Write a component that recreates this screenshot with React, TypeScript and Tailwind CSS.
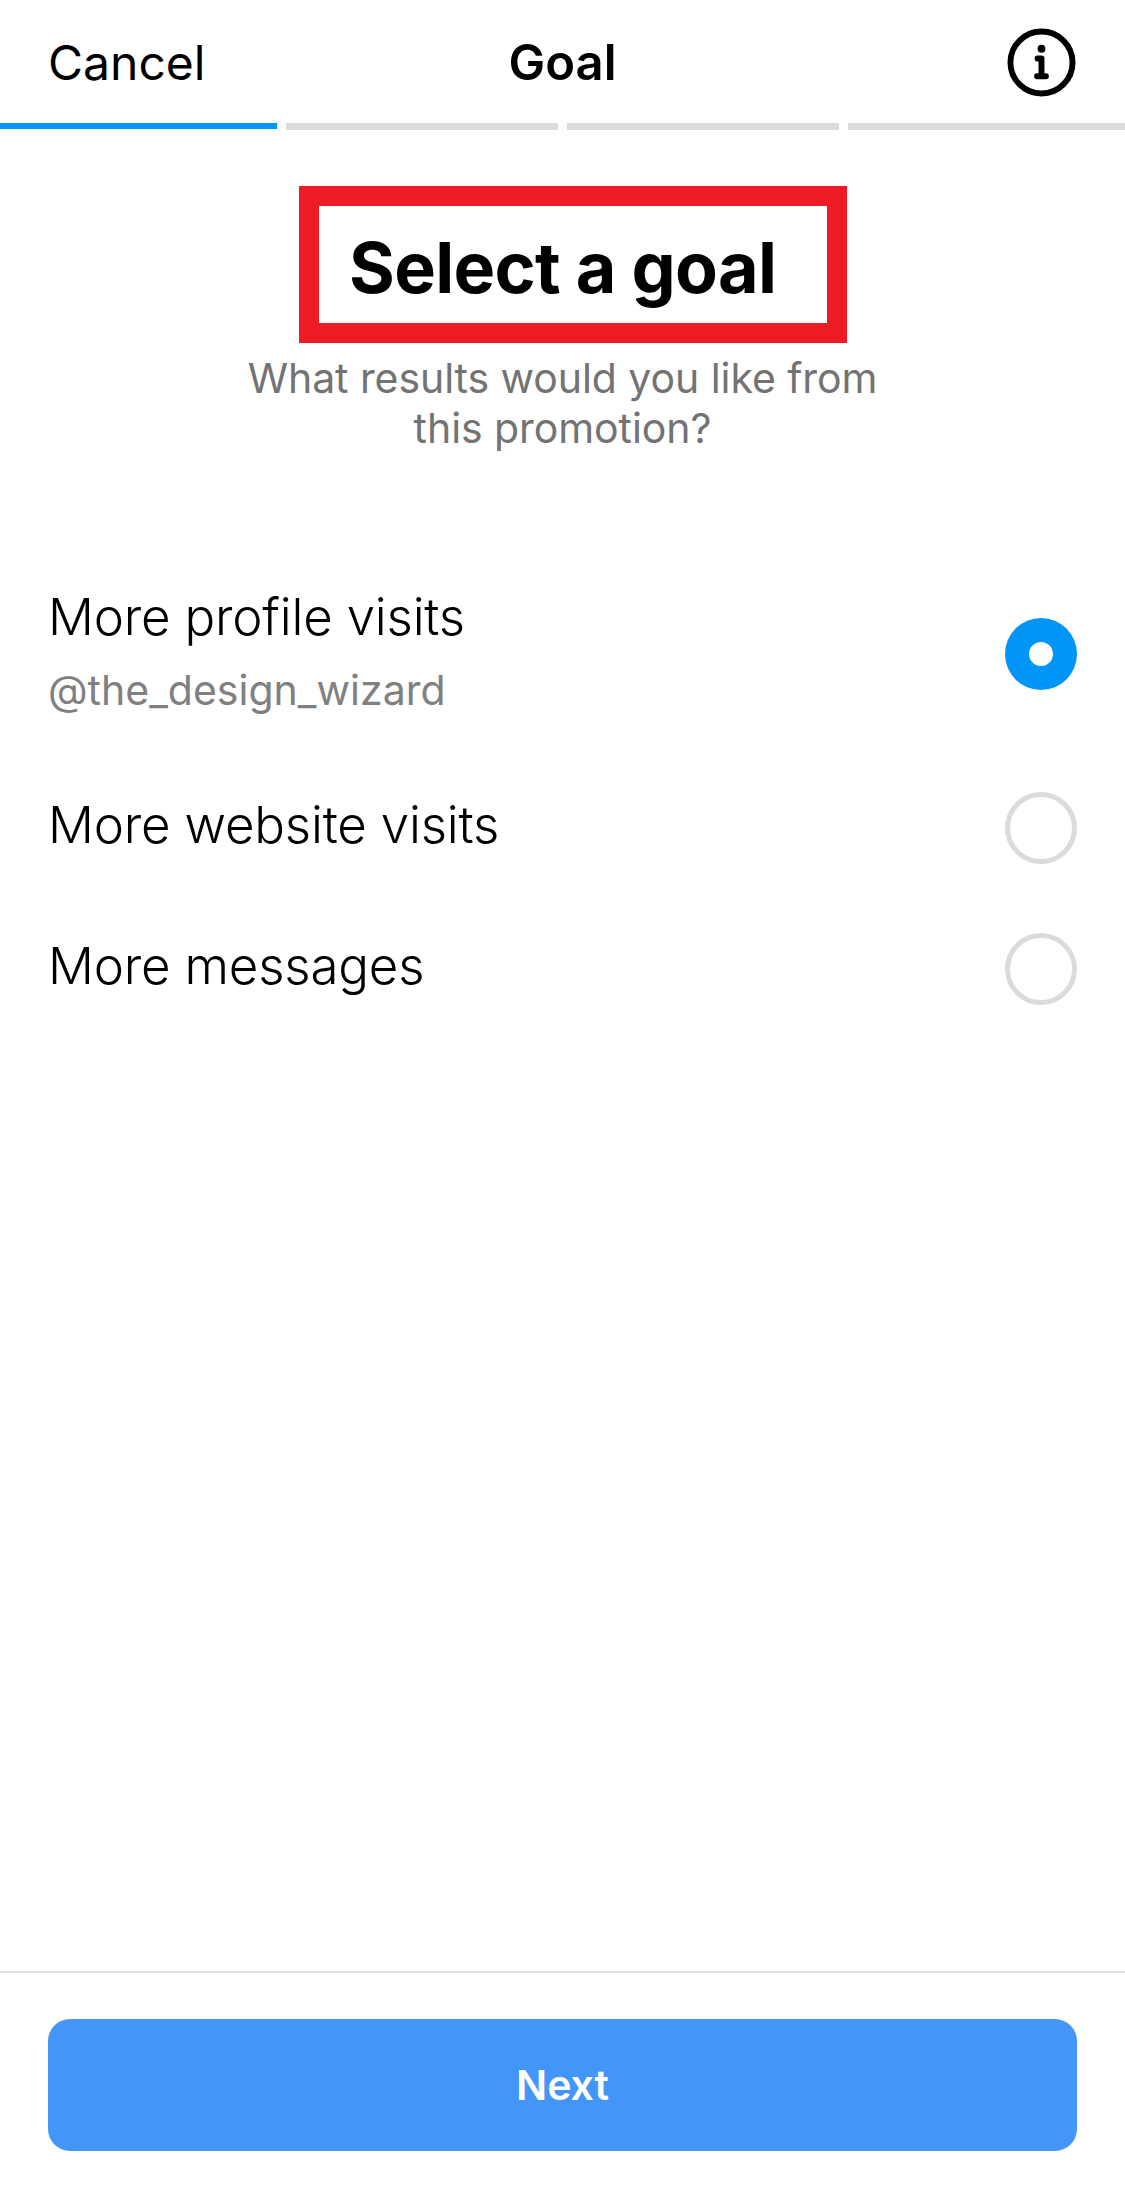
const goals = [
  { label: "More profile visits", handle: "@the_design_wizard", selected: true, rowClass: "h-[206px]" },
  { label: "More website visits", rowClass: "h-[142px]" },
  { label: "More messages", rowClass: "h-[140px]" },
];

function InfoIcon() {
  return (
    <svg width="69" height="69" viewBox="0 0 70 70" fill="none" className="mr-[1px]">
      <circle cx="35" cy="35" r="31.5" stroke="#000" strokeWidth="6" />
      <circle cx="35" cy="21" r="4" fill="#000" />
      <path d="M31 31h4v18M30.5 49h9" stroke="#000" strokeWidth="6" strokeLinecap="round" strokeLinejoin="round" />
    </svg>
  );
}

function Radio({ selected }: { selected?: boolean }) {
  if (selected) {
    return (
      <div className="w-[72px] h-[72px] rounded-full bg-[#0095f6] flex items-center justify-center">
        <div className="w-6 h-6 rounded-full bg-white" />
      </div>
    );
  }
  return <div className="w-[72px] h-[72px] rounded-full border-[5px] border-[#dbdbdb]" />;
}

export default function App() {
  return (
    <div className="h-[2200px] bg-white flex flex-col font-['Inter',sans-serif] text-black">
      <header className="h-[123px] grid grid-cols-[1fr_auto_1fr] items-center pl-[48px] pr-[48px] pt-[2px]">
        <button className="text-left text-[48px] leading-none">Cancel</button>
        <h2 className="text-[49px] leading-none font-semibold">Goal</h2>
        <div className="flex justify-end">
          <InfoIcon />
        </div>
      </header>

      {/* step progress */}
      <div className="flex gap-[9px] h-[7px]">
        <div className="w-[277px] h-[6px] bg-[#0095f6]" />
        <div className="w-[272px] bg-[#dbdbdb]" />
        <div className="w-[272px] bg-[#dbdbdb]" />
        <div className="flex-1 bg-[#dbdbdb]" />
      </div>

      <main className="flex-1 flex flex-col">
        <div className="flex flex-col items-center pt-[56px]">
          <div className="self-start ml-[299px] w-[548px] h-[157px] border-[20px] border-[#ed1c24] flex items-center pl-[30px] pt-[7px]">
            <h1 className="text-[70px] leading-none font-bold tracking-[-0.7px] whitespace-nowrap">Select a goal</h1>
          </div>
          <p className="mt-[10px] text-[41px] leading-[50px] tracking-[-0.07px] text-center text-[#737373]">
            What results would you like from
            <br />
            this promotion?
          </p>
        </div>

        <ul className="mt-[98px]">
          {goals.map((goal) => (
            <li key={goal.label} className={`flex items-center justify-between pl-[48px] pr-[48px] ${goal.rowClass}`}>
              <div className="pb-[7px]">
                <div className="text-[51px] leading-[60px] font-light tracking-[-0.2px]">{goal.label}</div>
                {goal.handle && <div className="text-[41px] leading-[50px] mt-[18px] text-[#808080]">{goal.handle}</div>}
              </div>
              <Radio selected={goal.selected} />
            </li>
          ))}
        </ul>
      </main>

      <footer className="h-[229px] border-t-2 border-[#e3e3e3] px-[48px] pt-[46px]">
        <button className="w-full h-[132px] pt-[2px] rounded-[22px] bg-[#4396f7] text-white text-[41px] font-semibold">Next</button>
      </footer>
    </div>
  );
}
